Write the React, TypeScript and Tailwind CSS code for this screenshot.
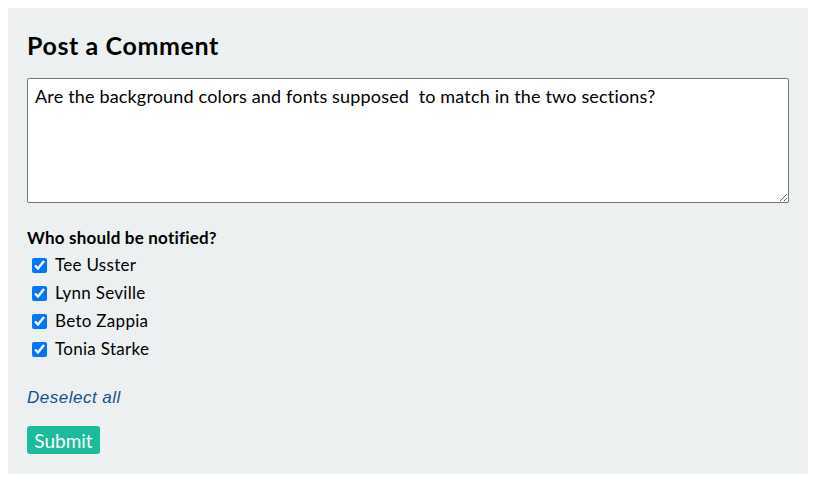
import { useState } from "react";

const PEOPLE = ["Tee Usster", "Lynn Seville", "Beto Zappia", "Tonia Starke"];

export default function App() {
  const [checked, setChecked] = useState<boolean[]>(PEOPLE.map(() => true));

  return (
    <div className="m-2 bg-[#ecf0f1] px-[19px] pt-[25px] pb-[20px] text-black">
      <h1 className="font-['Lato',sans-serif] text-[25px] font-bold leading-none tracking-[0.6px] mb-[20px]">Post a Comment</h1>

      <textarea
        className="block w-full h-[125px] border border-[#767676] bg-white rounded-[2px] px-[7px] py-[6px] font-['Lato',sans-serif] text-[18px] tracking-[0.17px] leading-[22px] text-black outline-none"
        defaultValue="Are the background colors and fonts supposed  to match in the two sections?"
      />

      <div className="mt-[25px] font-['Lato',sans-serif] text-[17px] font-bold leading-[20px] tracking-[0.2px]">Who should be notified?</div>

      <div className="mt-[3px] flex flex-col font-['Lato',sans-serif] text-[17px] tracking-[0.3px]">
        {PEOPLE.map((name, i) => (
          <label key={name} className="flex h-[28px] items-center gap-[8px] pl-[5px]">
            <input
              type="checkbox"
              checked={checked[i]}
              onChange={() => setChecked(checked.map((c, j) => (j === i ? !c : c)))}
              className="m-0 h-[15px] w-[15px] accent-[#0075ff]"
            />
            <span>{name}</span>
          </label>
        ))}
      </div>

      <button
        type="button"
        onClick={() => setChecked(PEOPLE.map(() => false))}
        className="mt-[25px] block font-['Liberation_Sans',Arial,sans-serif] text-[17px] italic tracking-[0.5px] text-[#15508c] leading-[20px]"
      >
        Deselect all
      </button>

      <button
        type="button"
        className="mt-[18px] block h-[28px] w-[73px] rounded-[3px] bg-[#1abc9c] font-['Lato',sans-serif] text-[19px] text-white leading-none"
      >
        Submit
      </button>
    </div>
  );
}
